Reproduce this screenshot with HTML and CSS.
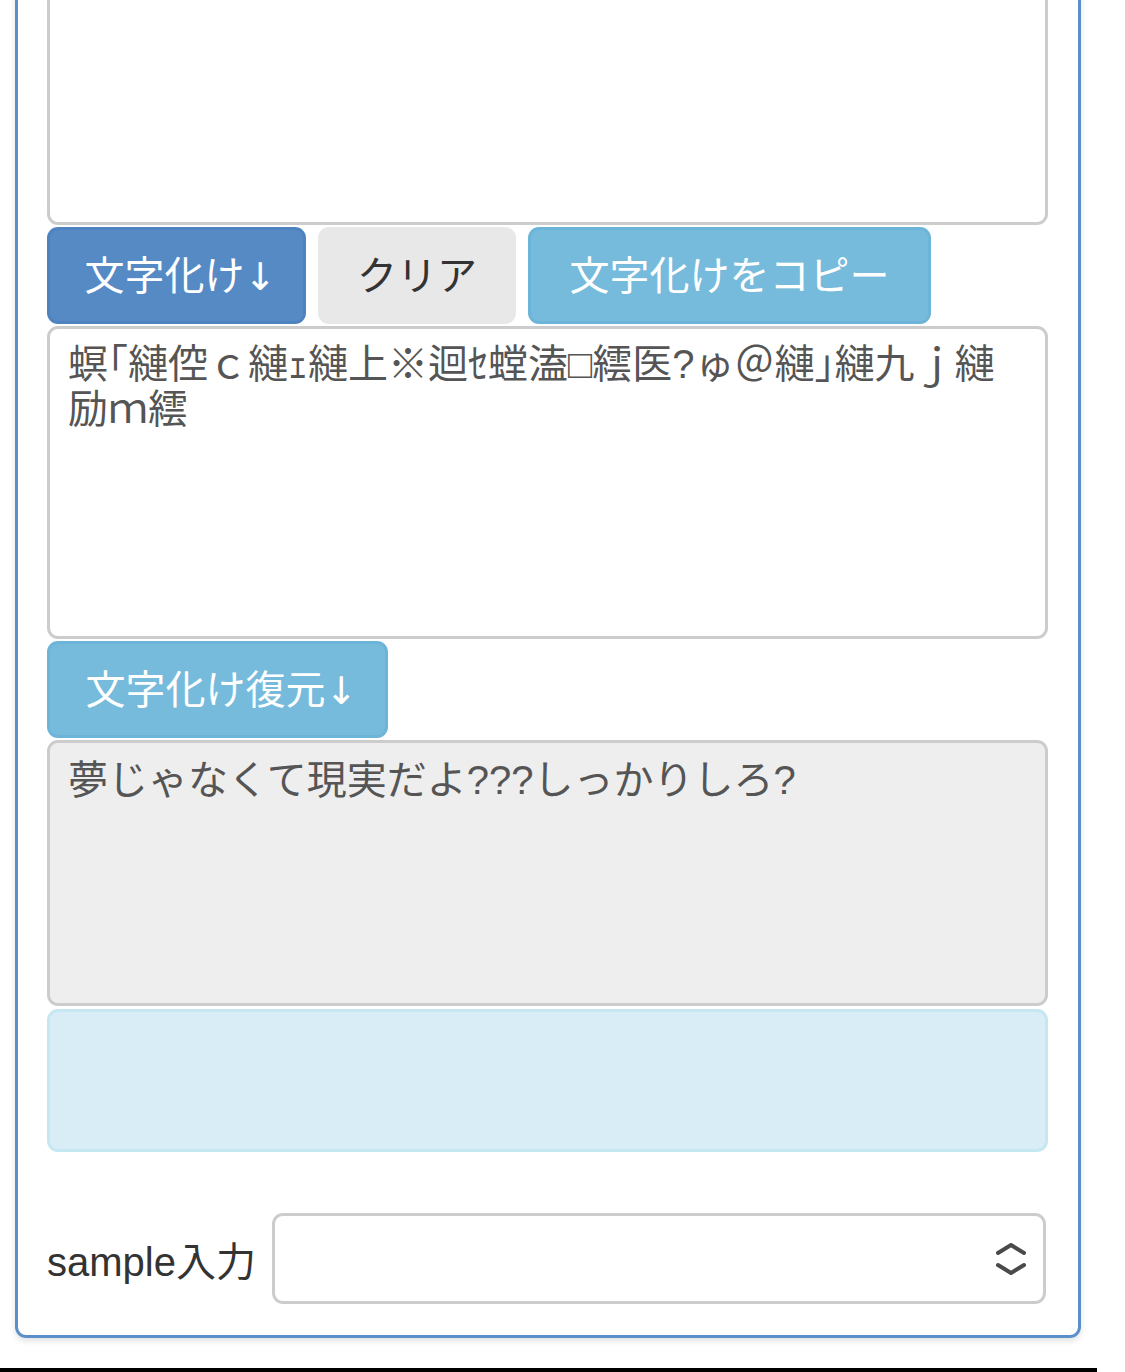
FILE: index.html
```html
<!DOCTYPE html>
<html lang="ja">
<head>
    <meta charset="UTF-8">
    <meta name="viewport" content="width=device-width, initial-scale=1.0">
    <title>文字化けメーカー</title>
    <link rel="stylesheet" href="styles.css">
</head>

<body>
    <div class="panel">
        <textarea class="text-box source"></textarea>

        <div class="btn-row">
            <button class="btn btn-primary btn-convert" type="button">文字化け<span class="arrow">↓</span></button>
            <button class="btn btn-default btn-clear" type="button">クリア</button>
            <button class="btn btn-info btn-copy" type="button">文字化けをコピー</button>
        </div>

        <textarea class="text-box garbled">螟｢縺倥ｃ縺ｪ縺上※迴ｾ螳溘□繧医?ゅ＠縺｣縺九ｊ縺励ｍ繧</textarea>

        <div class="btn-row">
            <button class="btn btn-info btn-restore" type="button">文字化け復元<span class="arrow">↓</span></button>
        </div>

        <textarea class="text-box restored" readonly>夢じゃなくて現実だよ???しっかりしろ?</textarea>

        <div class="notice"></div>

        <div class="sample-row">
            <label class="sample-label" for="sample">sample入力</label>
            <div class="select-wrap">
                <select class="sample-select" id="sample">
                    <option value=""></option>
                </select>
                <svg class="select-icon" width="30" height="32" viewBox="0 0 30 32">
                    <path d="M2 10 L15 2 L28 10 M2 22 L15 30 L28 22" fill="none" stroke="#4a4a4a" stroke-width="4" stroke-linecap="round" stroke-linejoin="round"/>
                </svg>
            </div>
        </div>
    </div>

    <div class="bottom-bar"></div>
</body>
</html>
```

FILE: styles.css
```css
* {
    box-sizing: border-box;
}

body {
    margin: 0;
    background-color: #fff;
    font-family: "Liberation Sans", "Noto Sans CJK JP", sans-serif;
    font-size: 40px;
    color: #333;
}

.panel {
    width: 1066px;
    margin: -100px 0 30px 15px;
    padding: 17px 30px 31px 29px;
    border: 3px solid #5b8fca;
    border-radius: 11px;
    box-shadow: 0 3px 6px rgba(0, 0, 0, 0.12);
}

.text-box {
    display: block;
    width: 100%;
    padding: 13px 18px 10px;
    border: 3px solid #ccc;
    border-radius: 11px;
    font: inherit;
    line-height: 45px;
    color: #555;
    background-color: #fff;
    resize: none;
    overflow: hidden;
}

.source {
    height: 305px;
}

.garbled {
    height: 313px;
    margin-top: 2px;
}

.restored {
    height: 266px;
    margin-top: 2px;
    padding-top: 15px;
    background-color: #eee;
}

.btn-row {
    display: flex;
    gap: 12px;
    margin-top: 2px;
}

.btn {
    height: 97px;
    padding: 0 0 0 8px;
    border: 3px solid transparent;
    border-radius: 11px;
    font: inherit;
    line-height: 1;
    color: #fff;
    text-align: center;
    white-space: nowrap;
}

.arrow {
    font-family: "DejaVu Sans", sans-serif;
    font-size: 38px;
}

.btn-convert {
    width: 259px;
}

.btn-clear {
    width: 198px;
    padding: 0;
}

.btn-copy {
    width: 403px;
    padding: 0;
}

.btn-restore {
    width: 341px;
}

.btn-primary {
    background-color: #568ac5;
    border-color: #4f83bf;
}

.btn-default {
    background-color: #e8e8e8;
    border-color: #e8e8e8;
    color: #333;
}

.btn-info {
    background-color: #76bbdb;
    border-color: #6cb5d8;
}

.notice {
    height: 143px;
    margin-top: 3px;
    background-color: #d9edf7;
    border: 3px solid #c5e7f1;
    border-radius: 11px;
}

.sample-row {
    display: flex;
    align-items: center;
    gap: 16px;
    margin-top: 61px;
}

.sample-label {
    white-space: nowrap;
}

.select-wrap {
    position: relative;
    flex: 1;
    margin-right: 2px;
}

.sample-select {
    display: block;
    width: 100%;
    height: 91px;
    appearance: none;
    border: 3px solid #ccc;
    border-radius: 11px;
    background-color: #fff;
    font: inherit;
}

.select-icon {
    position: absolute;
    right: 20px;
    top: 30px;
}

.bottom-bar {
    width: 1097px;
    height: 4px;
    background-color: #000;
}
```
